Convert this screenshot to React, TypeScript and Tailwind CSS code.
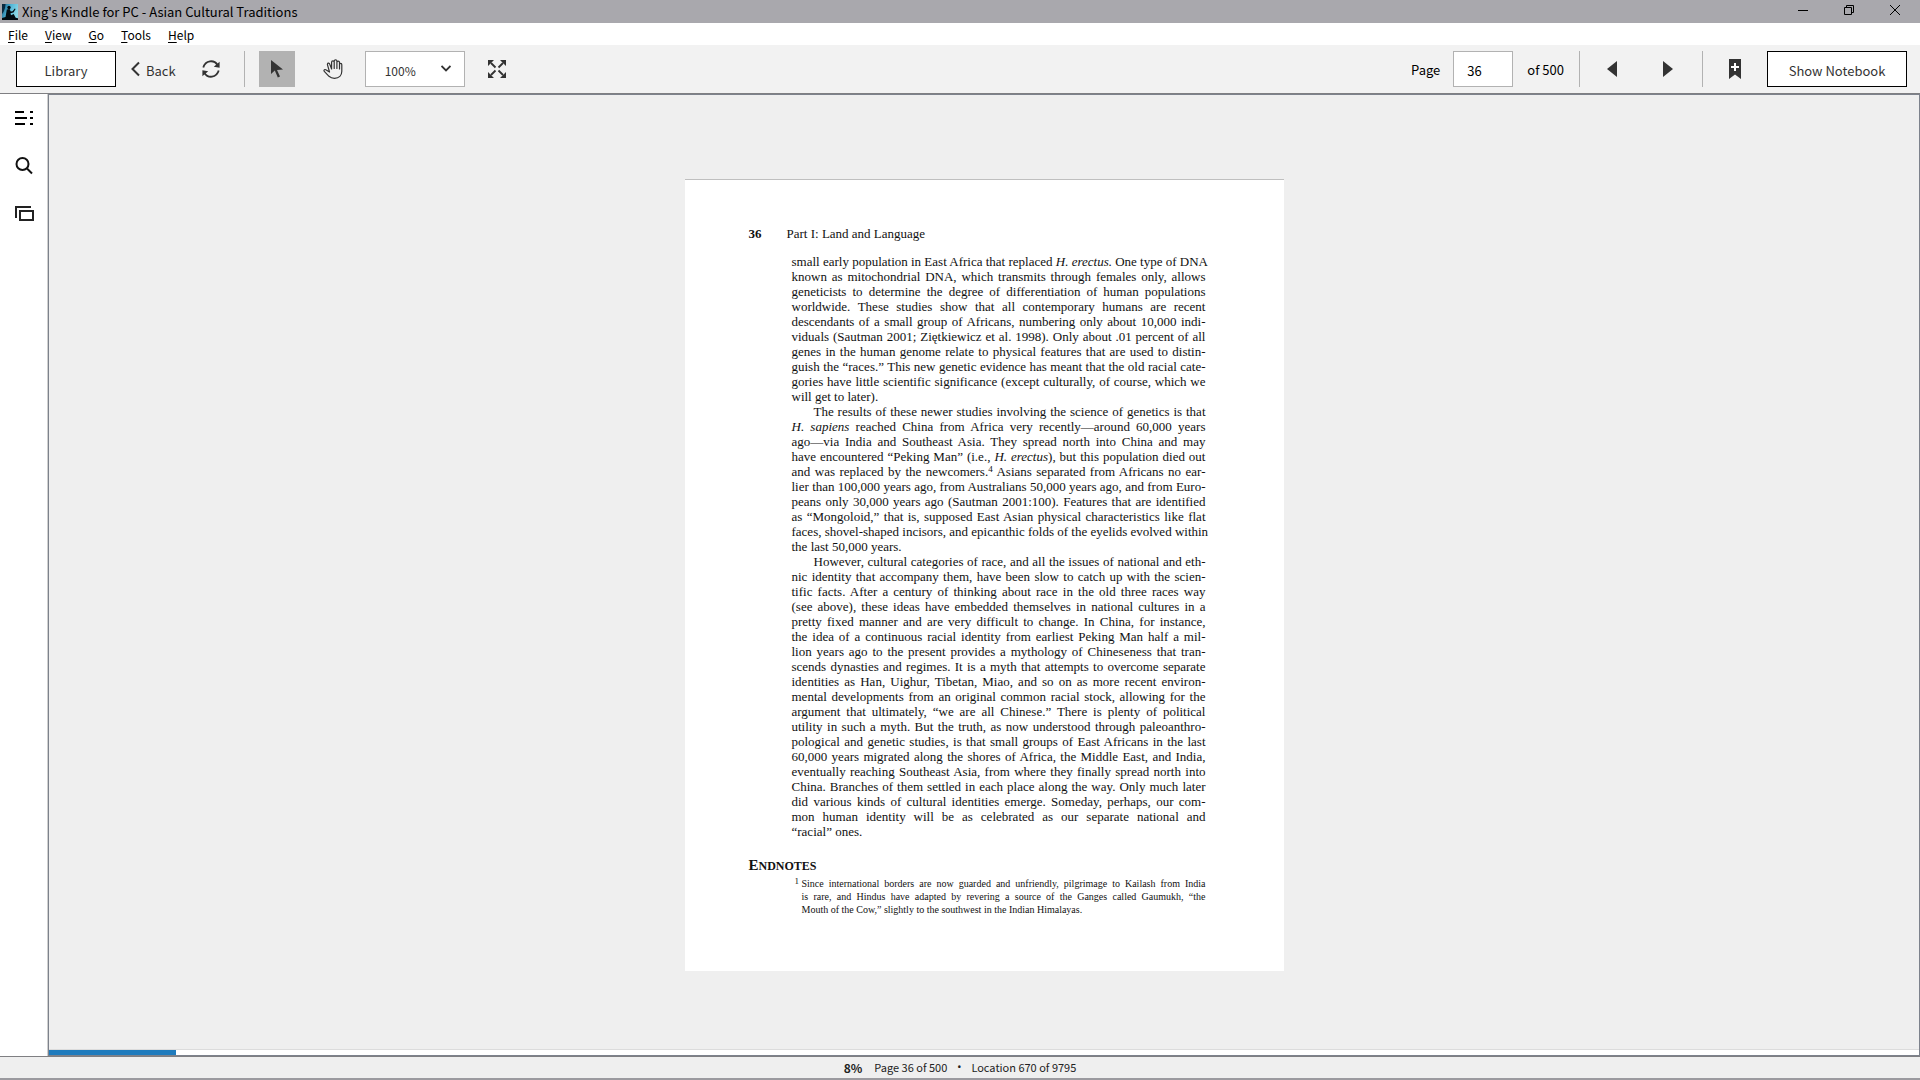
import type { ReactNode } from 'react'

type Line = ReactNode

const RACE_PARAGRAPH: Line[] = [
  <>small early population in East Africa that replaced <i>H. erectus.</i> One type of DNA</>,
  'known as mitochondrial DNA, which transmits through females only, allows',
  'geneticists to determine the degree of differentiation of human populations',
  'worldwide. These studies show that all contemporary humans are recent',
  'descendants of a small group of Africans, numbering only about 10,000 indi-',
  'viduals (Sautman 2001; Ziętkiewicz et al. 1998). Only about .01 percent of all',
  'genes in the human genome relate to physical features that are used to distin-',
  'guish the “races.” This new genetic evidence has meant that the old racial cate-',
  'gories have little scientific significance (except culturally, of course, which we',
  'will get to later).',
]

const ORIGINS_PARAGRAPH: Line[] = [
  'The results of these newer studies involving the science of genetics is that',
  <><i>H. sapiens</i> reached China from Africa very recently—around 60,000 years</>,
  'ago—via India and Southeast Asia. They spread north into China and may',
  <>have encountered “Peking Man” (i.e., <i>H. erectus</i>), but this population died out</>,
  <>and was replaced by the newcomers.<sup className="text-[9px]">4</sup> Asians separated from Africans no ear-</>,
  'lier than 100,000 years ago, from Australians 50,000 years ago, and from Euro-',
  'peans only 30,000 years ago (Sautman 2001:100). Features that are identified',
  'as “Mongoloid,” that is, supposed East Asian physical characteristics like flat',
  'faces, shovel-shaped incisors, and epicanthic folds of the eyelids evolved within',
  'the last 50,000 years.',
]

const IDENTITY_PARAGRAPH: Line[] = [
  'However, cultural categories of race, and all the issues of national and eth-',
  'nic identity that accompany them, have been slow to catch up with the scien-',
  'tific facts. After a century of thinking about race in the old three races way',
  '(see above), these ideas have embedded themselves in national cultures in a',
  'pretty fixed manner and are very difficult to change. In China, for instance,',
  'the idea of a continuous racial identity from earliest Peking Man half a mil-',
  'lion years ago to the present provides a mythology of Chineseness that tran-',
  'scends dynasties and regimes. It is a myth that attempts to overcome separate',
  'identities as Han, Uighur, Tibetan, Miao, and so on as more recent environ-',
  'mental developments from an original common racial stock, allowing for the',
  'argument that ultimately, “we are all Chinese.” There is plenty of political',
  'utility in such a myth. But the truth, as now understood through paleoanthro-',
  'pological and genetic studies, is that small groups of East Africans in the last',
  '60,000 years migrated along the shores of Africa, the Middle East, and India,',
  'eventually reaching Southeast Asia, from where they finally spread north into',
  'China. Branches of them settled in each place along the way. Only much later',
  'did various kinds of cultural identities emerge. Someday, perhaps, our com-',
  'mon human identity will be as celebrated as our separate national and',
  '“racial” ones.',
]

const ENDNOTE: Line[] = [
  'Since international borders are now guarded and unfriendly, pilgrimage to Kailash from India',
  'is rare, and Hindus have adapted by revering a source of the Ganges called Gaumukh, “the',
  'Mouth of the Cow,” slightly to the southwest in the Indian Himalayas.',
]

const MENUS = ['File', 'View', 'Go', 'Tools', 'Help']

// Print layout: every line but the last is set to the full measure.
function Justified({ lines, indent = false }: { lines: Line[]; indent?: boolean }) {
  return (
    <p>
      {lines.map((line, i) => (
        <span
          key={i}
          className={`block whitespace-nowrap ${i < lines.length - 1 ? '[text-align-last:justify]' : ''} ${
            indent && i === 0 ? 'pl-[22px]' : ''
          }`}
        >
          {line}{' '}
        </span>
      ))}
    </p>
  )
}

function KindleLogo() {
  return (
    <svg viewBox="0 0 16 16" className="size-4" aria-hidden="true">
      <defs>
        <linearGradient id="sky" x1="0" y1="0" x2="1" y2="0.4">
          <stop offset="0" stopColor="#12567f" />
          <stop offset="0.5" stopColor="#4fb4d6" />
          <stop offset="1" stopColor="#8ad6e6" />
        </linearGradient>
      </defs>
      <rect width="16" height="16" fill="url(#sky)" />
      <path d="M0 0h3.500l-.5 4L1.500 8 0 10z" fill="#0a2a40" />
      <circle cx="7" cy="3.500" r="1.700" fill="#020a10" />
      <path d="M4.800 5.500 7.500 5l1.300 2.500 1.800-.3 2.200-2.700.8.500-2.100 3.500-3 .8.500 2 2.700-1.200 2 3.700L16 14.300V16H0v-2l3.500-1z" fill="#020a10" />
    </svg>
  )
}

function TitleBar() {
  return (
    <header className="flex h-[23px] shrink-0 items-center justify-between bg-[#a9a8ad] pr-0.5 pl-0.5 text-black">
      <div className="flex items-center gap-1">
        <KindleLogo />
        <h1 className="text-[13px]">Xing's Kindle for PC - Asian Cultural Traditions</h1>
      </div>
      <div className="flex h-full pb-[3px]">
        <button type="button" aria-label="Minimize" className="flex w-[46px] items-center justify-center">
          <svg viewBox="0 0 10 10" className="size-2.5"><path d="M0 5.500h10" stroke="#000" /></svg>
        </button>
        <button type="button" aria-label="Restore" className="flex w-[46px] items-center justify-center">
          <svg viewBox="0 0 10 10" className="size-2.5" fill="none" stroke="#000">
            <path d="M.5 2.500h7v7h-7zM2.500 2.500v-2h7v7h-2" />
          </svg>
        </button>
        <button type="button" aria-label="Close" className="flex w-[46px] items-center justify-center">
          <svg viewBox="0 0 10 10" className="size-2.5"><path d="M0 0l10 10M10 0L0 10" stroke="#000" /></svg>
        </button>
      </div>
    </header>
  )
}

function MenuBar() {
  return (
    <nav className="flex h-[22px] shrink-0 items-center gap-[17px] bg-white pt-0.5 pl-2 text-xs text-black">
      {MENUS.map((menu) => (
        <button key={menu} type="button">
          <span className="underline underline-offset-2">{menu[0]}</span>
          {menu.slice(1)}
        </button>
      ))}
    </nav>
  )
}

function Separator() {
  return <div className="h-9 w-px bg-[#b2b2b2]" />
}

function Toolbar() {
  return (
    <div className="flex h-12 shrink-0 items-center justify-between bg-[#f2f2f2] pr-[13px] pb-px pl-4 text-[13px] text-[#333]">
      <div className="flex items-center">
        <button type="button" className="h-9 w-[100px] border border-black bg-white pt-1">Library</button>
        <button type="button" className="ml-[15px] flex items-center gap-1.5">
          <svg viewBox="0 0 9 16" className="h-4 w-[9px]" fill="none" stroke="#333" strokeWidth="2">
            <path d="M8 1.500 1.500 8 8 14.500" />
          </svg>
          <span className="pt-1">Back</span>
        </button>
        <button type="button" aria-label="Sync" className="ml-[26px]">
          <svg viewBox="0 0 18 18" className="size-[18px]" fill="none" stroke="#333" strokeWidth="1.800">
            <path d="M1.300 7.500C3.500 0 12-.6 15.600 5M16.700 10.500C14.500 18 6 18.600 2.400 13" />
            <path d="M17.600 1.800v6l-5.800-1zM.4 16.200v-6l5.800 1z" fill="#333" stroke="none" />
          </svg>
        </button>
        <div className="ml-6"><Separator /></div>
        <button type="button" aria-label="Select" className="ml-3.5 flex size-9 items-center justify-center bg-[#b2b2b2]">
          <svg viewBox="0 0 12 18" className="h-[18px] w-3">
            <path d="M0 0v14l3.800-3.500 3 7 2.200-1-3-6.500 6-.5z" fill="#333" />
          </svg>
        </button>
        <button type="button" aria-label="Pan" className="ml-7">
          <svg viewBox="0 0 20 20" className="size-5" fill="none" stroke="#333" strokeWidth="1.200" strokeLinejoin="round" strokeLinecap="round">
            <path d="M6.500 13 2.800 10.700C1.300 10 .3 11.500 1.500 12.700L6 17.300c1.500 1.400 3 2 5.500 2 4.500 0 7.300-2.800 7.300-7V5.700c0-1.800-2.300-1.800-2.300 0V10V3.500c0-1.900-2.600-1.900-2.600 0V9.500V2.300c0-2-2.700-2-2.700 0V9.500V3.300c0-2-2.600-2-2.600 0V10L6.800 5.200C6.200 3.400 4 4 4.500 5.800L6.500 13" />
          </svg>
        </button>
        <div className="relative ml-[22px]">
          <select aria-label="Zoom" defaultValue="100%" className="h-9 w-[100px] appearance-none rounded-none border border-[#b2b2b2] bg-white pt-1 pl-[19px] text-xs">
            <option>50%</option>
            <option>100%</option>
            <option>150%</option>
          </select>
          <svg viewBox="0 0 10 7" className="pointer-events-none absolute top-3.5 right-3.5 h-[7px] w-2.5" fill="none" stroke="#333" strokeWidth="1.800">
            <path d="M.5 1 5 5.500 9.500 1" />
          </svg>
        </div>
        <button type="button" aria-label="Full screen" className="ml-[23px]">
          <svg viewBox="0 0 18 18" className="size-[18px]" fill="#333" stroke="#333" strokeWidth="1.800">
            <path d="M3 3l4.500 4.500M15 3l-4.500 4.500M3 15l4.500-4.500M15 15l-4.500-4.500" />
            <path d="M0 0h6L0 6zM18 0v6l-6-6zM0 18v-6l6 6zM18 18h-6l6-6z" stroke="none" />
          </svg>
        </button>
      </div>
      <div className="flex items-center">
        <label htmlFor="page" className="pt-0.5 text-black">Page</label>
        <input id="page" type="text" defaultValue="36" className="mr-3.5 ml-[13px] h-9 w-[60px] border border-[#b2b2b2] bg-white pt-1 pl-[13px] text-black" />
        <span className="pt-0.5 text-black">of 500</span>
        <div className="ml-[15px]"><Separator /></div>
        <button type="button" aria-label="Previous page" className="ml-[27px]">
          <svg viewBox="0 0 10 16" className="h-4 w-2.5" fill="#333"><path d="M10 0v16L0 8z" /></svg>
        </button>
        <button type="button" aria-label="Next page" className="ml-[46px]">
          <svg viewBox="0 0 10 16" className="h-4 w-2.5" fill="#333"><path d="M0 0v16l10-8z" /></svg>
        </button>
        <div className="ml-[29px]"><Separator /></div>
        <button type="button" aria-label="Bookmark" className="ml-[26px]">
          <svg viewBox="0 0 12 20" className="h-5 w-3" fill="#333">
            <path d="M0 0h12v20l-6-4.500L0 20z" />
            <path d="M6 4v8M2 8h8" stroke="#fff" strokeWidth="2" />
          </svg>
        </button>
        <button type="button" className="ml-[26px] h-9 w-[140px] border border-black bg-white pt-1">Show Notebook</button>
      </div>
    </div>
  )
}

function Sidebar() {
  return (
    <aside className="flex w-12 shrink-0 flex-col items-center gap-[30px] border-r border-[#cfcfcf] bg-white pt-[15px] pl-px">
      <button type="button" aria-label="Table of contents">
        <svg viewBox="0 0 18 18" className="size-[18px]" stroke="#000" strokeWidth="2">
          <path d="M0 3h9M0 9h12M0 15h10M15 3h3M15 9h3M15 15h3" />
        </svg>
      </button>
      <button type="button" aria-label="Search">
        <svg viewBox="0 0 18 18" className="size-[18px]" fill="none" stroke="#111" strokeWidth="2">
          <circle cx="7.500" cy="7" r="6" />
          <path d="M12 11.500l5 5" />
        </svg>
      </button>
      <button type="button" aria-label="Flashcards">
        <svg viewBox="0 0 19 16" className="h-4 w-[19px]" fill="none" stroke="#222" strokeWidth="2">
          <path d="M1 13V2h15M5 6h13v9H5z" />
        </svg>
      </button>
    </aside>
  )
}

function BookPage() {
  return (
    <article className="h-[792px] w-[599px] border-t border-[#bfbfbf] bg-white pt-[46px] pr-[78px] pl-16 font-['Liberation_Serif',serif] text-[13px] leading-[15px] text-[#111]">
      <div className="flex">
        <b className="w-[38px]">36</b>
        <span>Part I: Land and Language</span>
      </div>
      <div className="mt-[13px] ml-[43px]">
        <Justified lines={RACE_PARAGRAPH} />
        <Justified lines={ORIGINS_PARAGRAPH} indent />
        <Justified lines={IDENTITY_PARAGRAPH} indent />
      </div>
      <h2 className="mt-[18px] text-xs leading-4 font-bold uppercase first-letter:text-[15px]">Endnotes</h2>
      <div className="mt-[3px] ml-[46px] flex text-[10px] leading-[13px]">
        <sup className="top-0 w-[7px] text-[9px] leading-[9px]">1</sup>
        <div className="flex-1">
          <Justified lines={ENDNOTE} />
        </div>
      </div>
    </article>
  )
}

export default function App() {
  return (
    <div className="flex h-screen flex-col overflow-hidden bg-[#efefef] font-['Noto_Sans_CJK_SC','Noto_Sans',sans-serif]">
      <TitleBar />
      <MenuBar />
      <Toolbar />
      <div className="flex min-h-0 flex-1 border-y border-[#7f7f82]">
        <Sidebar />
        <main className="flex min-w-0 flex-1 flex-col border border-[#7d828c]">
          <div className="flex min-h-0 flex-1 justify-center pt-[84px]">
            <BookPage />
          </div>
          <div className="h-1.5 shrink-0 border-t border-[#dcdcdc] bg-white" role="progressbar" aria-label="Reading progress" aria-valuenow={8}>
            <div className="h-full w-[127px] bg-[#1f7bbd]" />
          </div>
        </main>
      </div>
      <footer className="flex h-[23px] shrink-0 items-center justify-center border-b-2 border-[#9b9a9f] text-[11px] text-[#222]">
        <b className="text-xs font-semibold">8%</b>
        <span className="ml-3">Page 36 of 500</span>
        <span className="mx-2.5 font-['Noto_Sans']">•</span>
        <span>Location 670 of 9795</span>
      </footer>
    </div>
  )
}
